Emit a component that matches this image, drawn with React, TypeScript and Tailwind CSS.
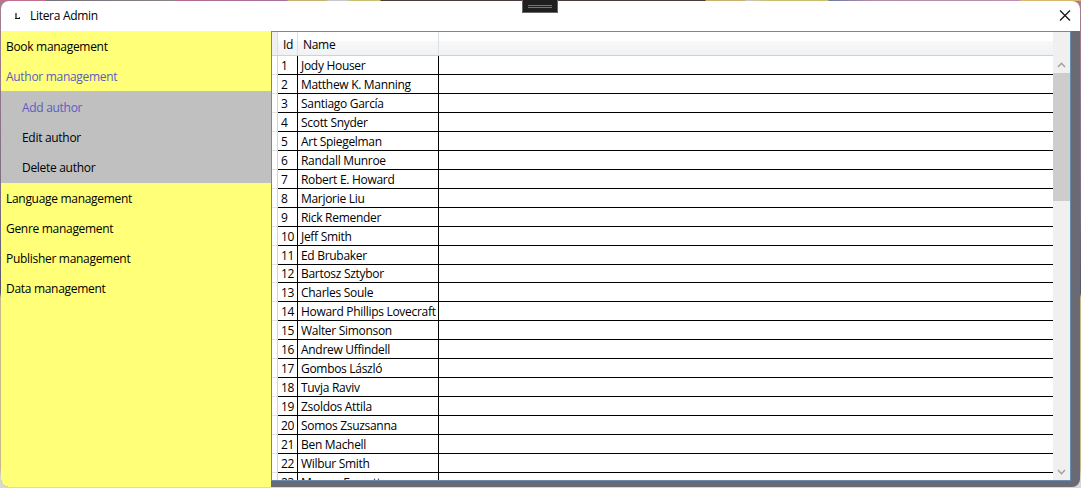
import React from 'react';

const authors = [
  'Jody Houser', 'Matthew K. Manning', 'Santiago García', 'Scott Snyder', 'Art Spiegelman',
  'Randall Munroe', 'Robert E. Howard', 'Marjorie Liu', 'Rick Remender', 'Jeff Smith',
  'Ed Brubaker', 'Bartosz Sztybor', 'Charles Soule', 'Howard Phillips Lovecraft',
  'Walter Simonson', 'Andrew Uffindell', 'Gombos László', 'Tuvja Raviv', 'Zsoldos Attila',
  'Somos Zsuzsanna', 'Ben Machell', 'Wilbur Smith', 'Marcus Everett',
];

function MenuItem({ label, active = false }: { label: string; active?: boolean }) {
  return (
    <div className={`flex h-[30px] items-center pt-[2px] pl-[5px] ${active ? 'text-[#5c5cc4]' : 'text-black'}`}>
      {label}
    </div>
  );
}

function SubItem({ label, active = false }: { label: string; active?: boolean }) {
  return (
    <div className={`flex h-[30px] items-center pt-[2px] pl-[21px] ${active ? 'text-[#5c5cc4]' : 'text-black'}`}>
      {label}
    </div>
  );
}

function TitleBar() {
  return (
    <div className="flex h-[30px] shrink-0 items-center bg-white">
      <svg className="ml-[14px] h-[8px] w-[5px]" viewBox="0 0 5 8" fill="none">
        <path d="M1 1V6.5M0 6.5H4.5V5.2" stroke="#111" strokeWidth="1.2" />
      </svg>
      <span className="ml-[10px] text-black">Litera Admin</span>
      <svg className="mr-[9px] ml-auto h-[12px] w-[12px]" viewBox="0 0 12 12" fill="none">
        <path d="M1 0.5L11 10.5M11 0.5L1 10.5" stroke="#111" strokeWidth="1.2" />
      </svg>
    </div>
  );
}

function Row({ id, name }: { id: number; name: string }) {
  return (
    <div className={`flex shrink-0 ${id === 12 ? 'h-[18px]' : 'h-[19px]'}`}>
      <div className="w-[6px] shrink-0 border-r border-b border-r-[#d5d5d5] border-b-[#e3e4e6] bg-white" />
      <div className="flex w-[20px] shrink-0 items-start border-r border-b border-black pt-[2px] pl-[3px]">
        <span className={id === 12 ? '-mt-px' : ''}>{id}</span>
      </div>
      <div className="flex w-[141px] shrink-0 items-start border-r border-b border-black pt-[2px] pl-[3px] whitespace-nowrap">
        <span className={id === 12 ? '-mt-px' : ''}>{name}</span>
      </div>
      <div className="flex-1 border-b border-black" />
    </div>
  );
}

function ScrollBar() {
  return (
    <div className="flex w-[17px] shrink-0 flex-col bg-[#f0f0f0] pt-[24px]">
      <div className="flex h-[17px] items-center justify-center">
        <svg className="h-[6px] w-[9px]" viewBox="0 0 9 6" fill="none">
          <path d="M1 5L4.5 1.3L8 5" stroke="#a0a0a0" strokeWidth="1.5" />
        </svg>
      </div>
      <div className="h-[128px] bg-[#cdcdcd]" />
      <div className="mt-auto flex h-[17px] items-center justify-center">
        <svg className="h-[6px] w-[9px]" viewBox="0 0 9 6" fill="none">
          <path d="M1 1L4.5 4.7L8 1" stroke="#a0a0a0" strokeWidth="1.5" />
        </svg>
      </div>
    </div>
  );
}

export default function App() {
  return (
    <div className="relative h-[488px] w-[1081px] overflow-hidden bg-[linear-gradient(180deg,#a77f91_0%,#746b80_45%,#555463_60%,#c8b98a_61%,#c8b98a_96%,#d8d8d8_98%)] font-['Open_Sans','Noto_Sans',sans-serif] text-[12px] leading-[16px] tracking-[-0.3px]">
      <div className="h-px bg-[linear-gradient(90deg,#c0708f_0px,#c0708f_45px,#77707a_46px,#8a8288_175px,#b06a8c_176px,#a8709c_287px,#c9b070_288px,#c9b070_326px,#c8c8cc_328px,#c8c8cc_348px,#c9c070_349px,#c9c070_380px,#4a3c38_381px,#4a3c38_705px,#c9b070_706px,#c9b070_745px,#c8c8cc_746px,#c9c070_768px,#c9c070_828px,#6b7ba8_829px,#b08aa8_868px,#c090b0_1020px,#d8b870_1021px)]" />
      <div className="mx-px flex h-[486px] w-[1079px] flex-col overflow-hidden rounded-[8px] bg-[#696a73]">
        <TitleBar />
        <div className="flex min-h-0 flex-1">
          <div className="w-[270px] shrink-0 bg-[#ffff78]">
            <MenuItem label="Book management" />
            <MenuItem label="Author management" active />
            <div className="h-[92px] bg-[#c0c0c0] pt-px">
              <SubItem label="Add author" active />
              <SubItem label="Edit author" />
              <SubItem label="Delete author" />
            </div>
            <MenuItem label="Language management" />
            <MenuItem label="Genre management" />
            <MenuItem label="Publisher management" />
            <MenuItem label="Data management" />
          </div>
          <div className="flex h-[450px] w-[800px] shrink-0 border border-[#688caf] bg-white">
            <div className="flex min-w-0 flex-1 flex-col overflow-hidden text-black">
              <div className="flex h-[24px] shrink-0 border-b border-[#d0d1d4] bg-[linear-gradient(180deg,#ffffff_0%,#ffffff_40%,#f7f8fa_41%,#f1f2f4_100%)]">
                <div className="w-[6px] border-r border-[#dedfe1] bg-[#f0f0f0]" />
                <div className="flex w-[20px] items-center border-r border-[#dedfe1] pt-[2px] pl-[5px]">Id</div>
                <div className="flex w-[141px] items-center border-r border-[#dedfe1] pt-[2px] pl-[5px]">Name</div>
              </div>
              {authors.map((name, i) => (
                <Row key={name} id={i + 1} name={name} />
              ))}
            </div>
            <ScrollBar />
          </div>
        </div>
      </div>
      <div className="absolute top-0 left-[522px] flex h-[13px] w-[36px] flex-col items-center justify-center gap-px border border-t-0 border-[#686868] bg-[#1f1f1f]">
        <div className="h-px w-[24px] bg-[#777]" />
        <div className="h-px w-[24px] bg-[#777]" />
      </div>
    </div>
  );
}
